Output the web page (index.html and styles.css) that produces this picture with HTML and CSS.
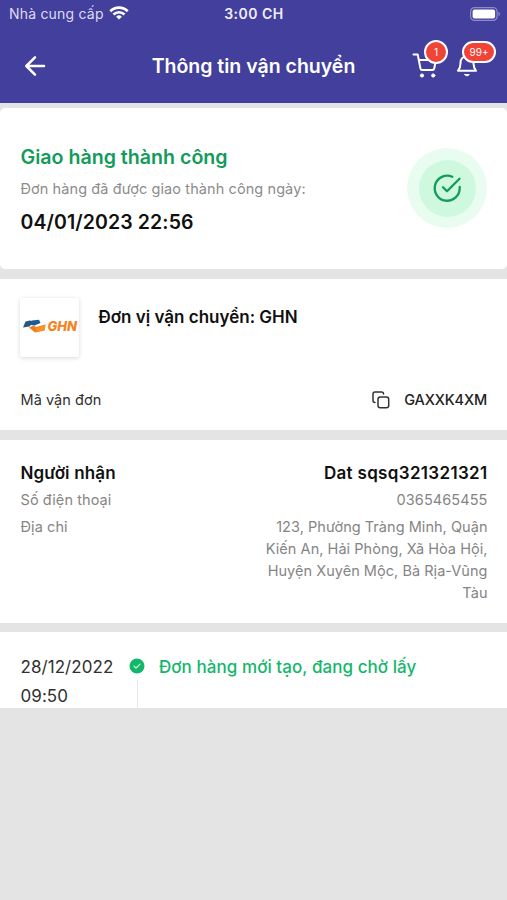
FILE: index.html
```html
<!DOCTYPE html>
<html lang="vi">
<head>
<meta charset="utf-8">
<meta name="viewport" content="width=device-width, initial-scale=1">
<title>Thông tin vận chuyển</title>
<link rel="stylesheet" href="styles.css">
</head>
<body>
<header class="top">
  <div class="status">
    <div class="carrier"><span>Nhà cung cấp</span>
      <svg class="wifi" width="20" height="14" viewBox="0 0 20 14" fill="none" stroke="#fff" stroke-width="2.7"><path d="M1.300 5.200a12.500 12.500 0 0 1 17.400 0M4.500 8.500a7.900 7.900 0 0 1 11 0"/><path d="M10 13.600 7.100 10.700a4.200 4.200 0 0 1 5.800 0z" fill="#fff" stroke="none"/></svg>
    </div>
    <span class="clock">3:00 CH</span>
    <svg class="battery" width="31" height="14" viewBox="0 0 31 14"><rect x=".6" y=".6" width="26.500" height="12.800" rx="4" fill="none" stroke="#8f8bc8" stroke-width="1.200"/><rect x="2.600" y="2.500" width="22.500" height="9" rx="2" fill="#fff"/><path d="M28.500 4.800c2 .8 2 3.600 0 4.400z" fill="#8f8bc8"/></svg>
  </div>
  <div class="nav">
    <svg class="back" width="22" height="22" viewBox="0 0 22 22" fill="none" stroke="#fff" stroke-width="2.500" stroke-linecap="round" stroke-linejoin="round"><path d="M20 11H2.500M11 2.300L2.300 11l8.700 8.700"/></svg>
    <h1>Thông tin vận chuyển</h1>
    <div class="actions">
      <div class="action cart">
        <svg width="26" height="26" viewBox="0 0 26 26" fill="none" stroke="#fff" stroke-width="2" stroke-linecap="round" stroke-linejoin="round"><path d="M1.500 1.500h4.200l2.700 13.800c.2 1.200.8 1.700 1.800 1.700h10.200c1 0 1.600-.5 1.800-1.500L24 7H6.800"/><circle cx="10" cy="22.500" r="1.600" fill="#fff" stroke-width="1"/><circle cx="21.200" cy="22.500" r="1.600" fill="#fff" stroke-width="1"/></svg>
        <span class="badge one">1</span>
      </div>
      <div class="action bell">
        <svg width="22" height="26" viewBox="0 0 22 26" fill="none" stroke="#fff" stroke-width="2" stroke-linecap="round" stroke-linejoin="round"><path d="M4.500 10.500V9.500a6.500 6.500 0 0 1 13 0v1c0 3.500 1.200 5.500 2.500 7.300H2c1.300-1.800 2.500-3.800 2.500-7.300z"/><path d="M8.800 21.500h4.400a2.300 1.800 0 0 1-4.400 0z" fill="#fff" stroke-width="1"/></svg>
        <span class="badge many">99+</span>
      </div>
    </div>
  </div>
</header>
<main>
  <section class="card result">
    <div>
      <h2>Giao hàng thành công</h2>
      <p class="note">Đơn hàng đã được giao thành công ngày:</p>
      <p class="when">04/01/2023 22:56</p>
    </div>
    <div class="halo"><div class="disc">
      <svg width="30" height="30" viewBox="0 0 30 30" fill="none" stroke="#129b5a" stroke-width="2.300" stroke-linecap="round" stroke-linejoin="round"><path d="M27.700 14V15.200A12.500 12.500 0 1 1 20.300 3.800"/><path d="M11 14.300l4 4L27.500 5.700"/></svg>
    </div></div>
  </section>
  <section class="card shipper">
    <div class="unit">
      <div class="logo"><svg width="56" height="18" viewBox="0 0 56 18"><path d="M3.500 4.500 8 3.500l4 1-4.500 5L1 10.500z" fill="#285782"/><path d="M10 3.500l7-.7 1.500 3.200-6 2.500-4.500-.8z" fill="#1d5c91"/><path d="M7 10.500l4.500-2 2.500 1.500 9.500-2.500-1 6-9.500 2z" fill="#ef7c20"/><path d="M14.500 10.500l9-2.500-1 5-9 2z" fill="#f8931f"/><text class="logo-text" x="25.500" y="14" textLength="29.500" lengthAdjust="spacingAndGlyphs">GHN</text></svg></div>
      <h3>Đơn vị vận chuyển: GHN</h3>
    </div>
    <div class="code"><span>Mã vận đơn</span><div class="copy">
      <svg width="18" height="18" viewBox="0 0 18 18" fill="none" stroke="#333" stroke-width="1.500" stroke-linecap="round" stroke-linejoin="round"><rect x="6" y="6" width="10.700" height="10.700" rx="2.300"/><path d="M3 11.500C1.700 11.500 1 10.700 1 9.500V3q0-2 2-2h6.500q2 0 2 2"/></svg><span class="num">GAXXK4XM</span></div></div>
  </section>
  <section class="card recipient">
    <div class="row name"><span>Người nhận</span><span class="who">Dat sqsq321321321</span></div>
    <div class="row phone"><span>Số điện thoại</span><span>0365465455</span></div>
    <div class="row addr"><span>Địa chỉ</span><span class="place">123, Phường Tràng Minh, Quận<br>Kiến An, Hải Phòng, Xã Hòa Hội,<br>Huyện Xuyên Mộc, Bà Rịa-Vũng<br>Tàu</span></div>
  </section>
  <section class="card history">
    <div class="time">28/12/2022<br>09:50</div>
    <div class="mark"><svg width="16" height="16" viewBox="0 0 16 16"><circle cx="8" cy="8" r="7.500" fill="#12b76a"/><path d="M5 8.200l2 2 4-4" fill="none" stroke="#d9f7e7" stroke-width="1.200" stroke-linecap="round" stroke-linejoin="round"/></svg><i></i></div>
    <div class="event">Đơn hàng mới tạo, đang chờ lấy</div>
  </section>
</main>
</body>
</html>
```
FILE: styles.css
```css
* { box-sizing: border-box; }
body { margin: 0; height: 900px; overflow: hidden; background: #e4e4e4; color: #101010; font-family: Inter, "Noto Sans", sans-serif; white-space: nowrap; }
h1, h2, h3, p { margin: 0; font-weight: 600; }
svg { display: block; flex: none; }
.top { height: 103px; background: #433f9d; color: #fff; }
.status { height: 28px; display: grid; grid-template-columns: 1fr auto 1fr; align-items: center; padding: 0 6px 0 9px; }
.carrier { display: flex; align-items: center; gap: 5px; font-size: 14px; letter-spacing: .2px; color: #dedcf1; }
.carrier span { margin-top: -1px; }
.wifi { margin-top: -2px; }
.clock { margin: -2px 2px 0 0; font-size: 14px; font-weight: 600; letter-spacing: .5px; color: #efeefa; }
.battery { justify-self: end; margin-top: -1px; }
.nav { height: 75px; display: grid; grid-template-columns: 1fr auto 1fr; align-items: center; padding: 0 11px 0 24px; }
.nav h1 { margin: 0 13px 0 0; font-size: 19.500px; line-height: 28px; }
.actions { display: flex; justify-content: flex-end; gap: 18px; }
.action { position: relative; }
.bell { width: 40px; }
.badge { position: absolute; display: flex; align-items: center; justify-content: center; background: #f04438; border: 2px solid #fff; border-radius: 12px; font-size: 10px; }
.one { left: 12px; top: -13px; width: 24px; height: 24px; }
.many { left: 6px; top: -12px; width: 34px; height: 22px; }
.card { background: #fff; }
.result { height: 161px; margin-top: 5px; border-radius: 5px; display: flex; justify-content: space-between; padding: 34px 20px 0 20.500px; }
.result h2 { font-size: 19.600px; line-height: 30px; color: #129b5a; }
.note { margin-top: 6px; font-size: 14.500px; line-height: 22px; letter-spacing: .09px; font-weight: 400; color: #8c8c8c; }
.when { margin-top: 8px; font-size: 19.500px; line-height: 28px; letter-spacing: .1px; }
.halo { width: 80px; height: 80px; margin-top: 6px; border-radius: 50%; background: #e8fdf0; display: grid; place-items: center; }
.disc { width: 57px; height: 57px; border-radius: 50%; background: #cff9de; display: grid; place-items: center; }
.shipper { height: 151px; margin-top: 10px; padding: 19px 20px 0; }
.unit { display: flex; gap: 19.500px; }
.unit h3 { font-size: 17px; line-height: 24px; margin-top: 7px; }
.logo { width: 59px; height: 59px; background: #fff; border-radius: 2px; box-shadow: 0 1px 4px rgba(0,0,0,.16); display: grid; place-items: center; padding-bottom: 3px; }
.logo-text { font: italic 800 13px Inter, sans-serif; fill: #f58220; }
.code { margin-top: 30px; height: 24px; display: flex; justify-content: space-between; align-items: center; font-size: 14.500px; letter-spacing: .05px; color: #303030; padding-left: .5px; }
.copy { display: flex; align-items: center; gap: 14px; }
.copy svg { margin-top: 2px; }
.num { font-weight: 500; letter-spacing: -.15px; color: #222; }
.recipient { height: 183px; margin-top: 10px; padding: 20px 19.500px 0 20.500px; font-size: 14.500px; letter-spacing: .08px; color: #858585; }
.row { display: flex; justify-content: space-between; text-align: right; line-height: 22px; }
.name { font-size: 17px; line-height: 26px; font-weight: 600; letter-spacing: .15px; color: #101010; }
.who { letter-spacing: .33px; }
.phone { margin-top: 3px; }
.addr { margin-top: 5px; }
.place { letter-spacing: .04px; }
.history { height: 76px; margin-top: 9px; padding: 21px 20px 0 20.500px; display: flex; overflow: hidden; font-size: 17px; line-height: 29px; letter-spacing: .06px; color: #303030; }
.time { width: 108.500px; }
.mark { width: 16px; display: flex; flex-direction: column; align-items: center; margin-top: 5px; }
.mark i { width: 1px; height: 30px; margin-top: 6px; background: #e8e8e8; }
.event { margin-left: 14px; color: #12b76a; font-weight: 500; }
```
